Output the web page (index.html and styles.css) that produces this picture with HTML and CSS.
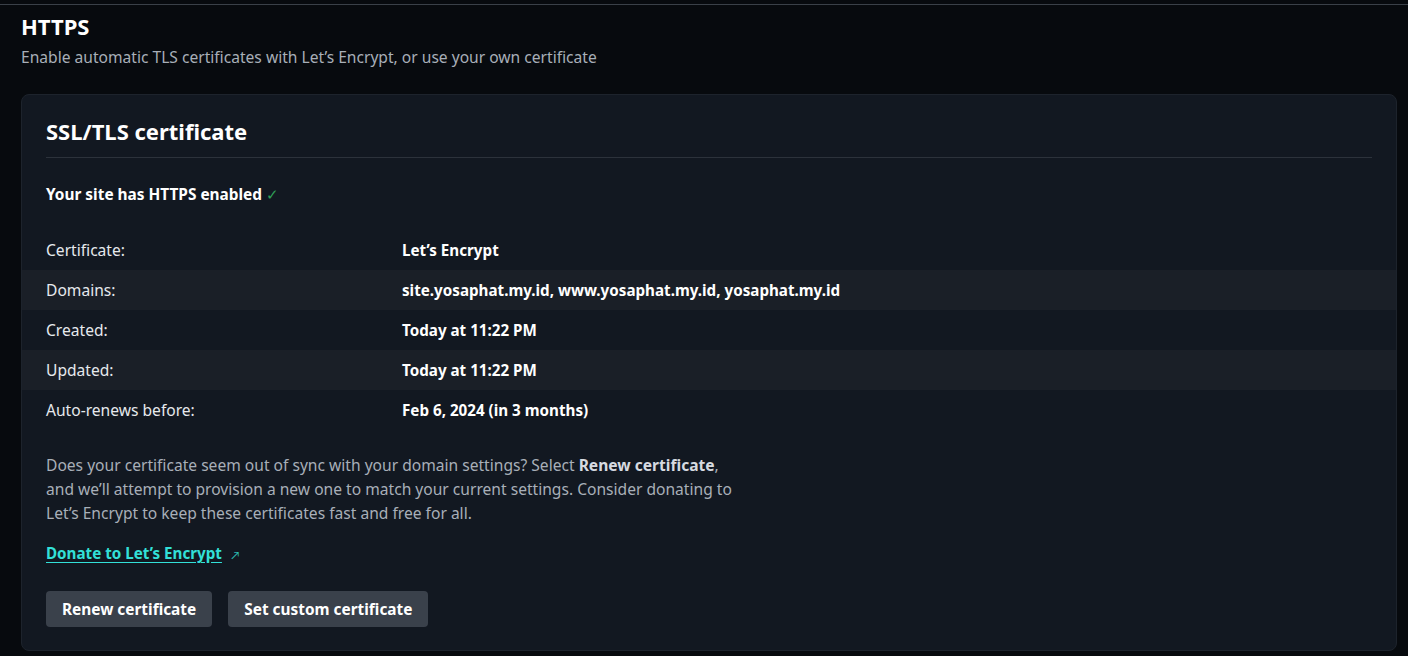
FILE: index.html
```html
<!DOCTYPE html>
<html>
<head>
<meta charset="utf-8">
<link rel="stylesheet" href="styles.css">
</head>
<body>
<div class="topline"></div>
<main class="page">
  <header class="intro">
    <h1 class="title">HTTPS</h1>
    <p class="subtitle">Enable automatic TLS certificates with Let’s Encrypt, or use your own certificate</p>
  </header>
  <section class="card">
    <div class="card-head">
      <h2 class="card-title">SSL/TLS certificate</h2>
    </div>
    <p class="status">Your site has HTTPS enabled <span class="check">✓</span></p>
    <dl class="details">
      <div class="row"><dt>Certificate:</dt><dd>Let’s Encrypt</dd></div>
      <div class="row alt"><dt>Domains:</dt><dd>site.yosaphat.my.id, www.yosaphat.my.id, yosaphat.my.id</dd></div>
      <div class="row"><dt>Created:</dt><dd>Today at 11:22 PM</dd></div>
      <div class="row alt"><dt>Updated:</dt><dd>Today at 11:22 PM</dd></div>
      <div class="row"><dt>Auto-renews before:</dt><dd>Feb 6, 2024 (in 3 months)</dd></div>
    </dl>
    <p class="note">Does your certificate seem out of sync with your domain settings? Select <strong>Renew certificate</strong>, and we’ll attempt to provision a new one to match your current settings. Consider donating to Let’s Encrypt to keep these certificates fast and free for all.</p>
    <p class="link-line"><a class="donate" href="#">Donate to Let’s Encrypt</a><span class="ext">↗</span></p>
    <div class="actions">
      <button class="btn">Renew certificate</button>
      <button class="btn">Set custom certificate</button>
    </div>
  </section>
</main>
</body>
</html>
```
FILE: styles.css
```css
* { box-sizing: border-box; }
html, body { margin: 0; padding: 0; }
body {
  background: #070a0e;
  color: #ffffff;
  font-family: "Noto Sans", Lato, sans-serif;
  font-size: 15.6px;
  width: 1408px;
  height: 656px;
  overflow: hidden;
  padding-top: 4px;
}
.topline { height: 1px; background: #3a4048; }
.page { padding: 8px 12px 0 21px; }
.intro { margin: 0; }
.title { margin: 0; font-size: 22px; font-weight: 700; line-height: 26px; }
.subtitle { margin: 8px 0 0; color: #a8afb8; line-height: 20px; }
.card {
  margin-top: 27px;
  background: #121821;
  border: 1px solid #1d232c;
  border-radius: 8px;
  padding: 0 0 23px;
  width: 1376px;
}
.card-head { margin: 0 24px; padding: 22px 0 12px; border-bottom: 1px solid #2c323b; }
.card-title { margin: 0; font-size: 22px; font-weight: 700; line-height: 28px; }
.status { margin: 0; padding: 27px 24px 0; font-size: 15.4px; font-weight: 700; line-height: 20px; }
.check { color: #2f9e57; font-weight: 400; }
.details { margin: 25px 0 0; }
.row { display: flex; height: 40px; align-items: center; padding: 0 24px; }
.row.alt { background: #1a1f27; }
.row dt { width: 356px; color: #e6e9ed; }
.row dd { margin: 0; font-size: 15.2px; font-weight: 700; }
.note {
  margin: 23px 24px 0;
  max-width: 694px;
  color: #a8afb8;
  line-height: 24px;
}
.note strong { color: #d6dae0; }
.link-line { margin: 16px 24px 0; line-height: 24px; }
.donate { color: #32e0d8; font-size: 15.2px; font-weight: 700; text-decoration: underline; text-underline-offset: 3px; }
.ext { color: #2bb8b0; font-size: 11px; margin-left: 9px; }
.actions { display: flex; gap: 16px; margin: 24px 24px 0; }
.btn {
  height: 36px;
  padding: 0 16px;
  background: #3a414b;
  color: #ffffff;
  border: 0;
  border-radius: 4px;
  font-family: inherit;
  font-size: 15.4px;
  font-weight: 700;
}
```
